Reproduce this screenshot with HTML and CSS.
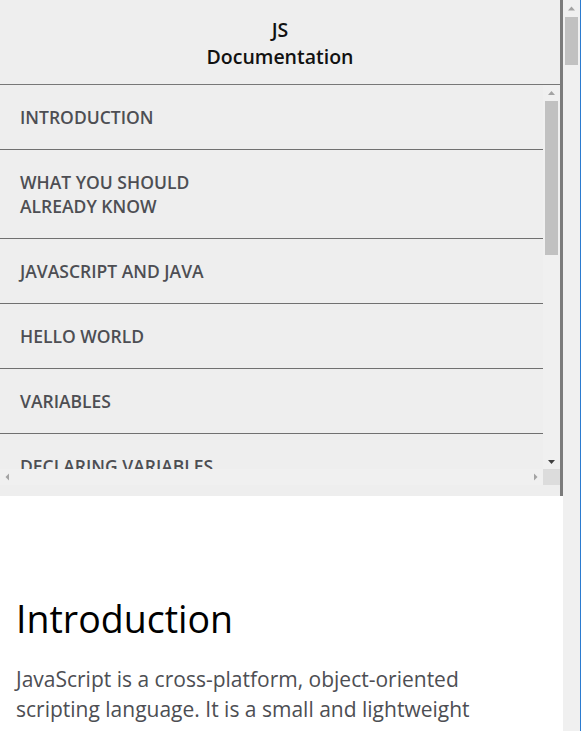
FILE: index.html
```html
<!DOCTYPE html>
<html lang="en">
<head>
<meta charset="utf-8">
<title>JS Documentation</title>
<link rel="stylesheet" href="styles.css">
</head>
<body>
<div class="window">
  <div class="page">
    <nav id="navbar" class="navbar">
      <header class="nav-header">JS<br>Documentation</header>
      <div class="nav-scroll">
        <div class="nav-viewport">
          <ul class="nav-list">
            <li><a class="nav-link" href="#Introduction">Introduction</a></li>
            <li><a class="nav-link" href="#What_you_should_already_know">What you should<br>already know</a></li>
            <li><a class="nav-link" href="#JavaScript_and_Java">JavaScript and Java</a></li>
            <li><a class="nav-link" href="#Hello_world">Hello world</a></li>
            <li><a class="nav-link" href="#Variables">Variables</a></li>
            <li><a class="nav-link" href="#Declaring_variables">Declaring variables</a></li>
            <li><a class="nav-link" href="#Variable_scope">Variable scope</a></li>
            <li><a class="nav-link" href="#Global_variables">Global variables</a></li>
          </ul>
        </div>
        <div class="vbar">
          <svg class="arrow" width="17" height="14" viewBox="0 0 17 14"><polygon points="5,10 12,10 8.5,6" fill="#a3a3a3"/></svg>
          <div class="vbar-track"><div class="vbar-thumb"></div></div>
          <svg class="arrow" width="17" height="14" viewBox="0 0 17 14"><polygon points="5,5 12,5 8.5,9" fill="#404040"/></svg>
        </div>
      </div>
      <div class="hbar-row">
        <div class="hbar">
          <svg width="14" height="16" viewBox="0 0 14 16"><polygon points="9,4.5 9,11.5 5.5,8" fill="#a3a3a3"/></svg>
          <svg width="14" height="16" viewBox="0 0 14 16"><polygon points="5,4.5 5,11.5 8.5,8" fill="#a3a3a3"/></svg>
        </div>
        <div class="corner"></div>
      </div>
    </nav>
    <main id="main-doc" class="main-doc">
      <section class="main-section" id="Introduction">
        <header class="section-title">Introduction</header>
        <p class="section-text">JavaScript is a cross-platform, object-oriented scripting language. It is a small and lightweight language. Inside a host environment (for example, a web browser), JavaScript can be connected to the objects of its environment to provide programmatic control over them.</p>
      </section>
    </main>
  </div>
  <div class="page-scrollbar">
    <svg class="arrow" width="17" height="17" viewBox="0 0 17 17"><polygon points="5,10.5 12,10.5 8.5,6.5" fill="#a3a3a3"/></svg>
    <div class="page-thumb"></div>
  </div>
</div>
</body>
</html>
```

FILE: styles.css
```css
* {
  box-sizing: border-box;
}

html,
body {
  margin: 0;
  padding: 0;
  height: 731px;
  overflow: hidden;
  background: #ffffff;
}

body {
  font-family: "Open Sans", "Noto Sans", sans-serif;
  color: #4d4e53;
}

.window {
  display: flex;
  height: 731px;
}

.page {
  width: 563px;
  flex: none;
  display: flex;
  flex-direction: column;
  overflow: hidden;
}

/* ---------- navbar ---------- */
.navbar {
  height: 496px;
  flex: none;
  display: flex;
  flex-direction: column;
  background: #eeeeee;
  border-right: 3px solid #7b7b7b;
  padding-bottom: 11px;
}

.nav-header {
  height: 85px;
  flex: none;
  padding-top: 16px;
  text-align: center;
  font-size: 19.5px;
  line-height: 27px;
  font-weight: 600;
  color: #111111;
  border-bottom: 1px solid #777777;
}

.nav-scroll {
  height: 384px;
  flex: none;
  display: flex;
}

.nav-viewport {
  flex: 1;
  overflow: hidden;
}

.nav-list {
  list-style: none;
  margin: 0;
  padding: 0;
}

.nav-list li {
  border-bottom: 1px solid #707070;
}

.nav-link {
  display: block;
  padding: 20px 20px;
  font-size: 17.5px;
  line-height: 24px;
  font-weight: 600;
  text-transform: uppercase;
  text-decoration: none;
  color: #4d4e53;
}

.vbar {
  width: 17px;
  flex: none;
  display: flex;
  flex-direction: column;
  background: #f0f0f0;
}

.vbar .arrow {
  display: block;
  flex: none;
}

.vbar-track {
  flex: 1;
  padding: 2px 2px 0;
}

.vbar-thumb {
  height: 154px;
  background: #c1c1c1;
}

.hbar-row {
  height: 16px;
  flex: none;
  display: flex;
}

.hbar {
  flex: 1;
  display: flex;
  justify-content: space-between;
  background: #f0f0f0;
}

.hbar svg {
  display: block;
}

.corner {
  width: 17px;
  background: #dcdcdc;
}

/* ---------- main ---------- */
.main-doc {
  flex: 1;
  background: #ffffff;
  padding: 99px 40px 0 16px;
}

.section-title {
  font-size: 37.5px;
  line-height: 48px;
  font-weight: 400;
  color: #000000;
  margin: 0;
}

.section-text {
  margin: 21px 0 0;
  font-size: 21px;
  line-height: 30px;
  color: #4d4e53;
}

/* ---------- page scrollbar ---------- */
.page-scrollbar {
  width: 18px;
  flex: none;
  background: #f0f0f0;
  border-right: 1px solid #2b7bd0;
  display: flex;
  flex-direction: column;
}

.page-scrollbar .arrow {
  display: block;
  flex: none;
}

.page-thumb {
  height: 48px;
  margin: 0 2px;
  background: #c1c1c1;
}
```
